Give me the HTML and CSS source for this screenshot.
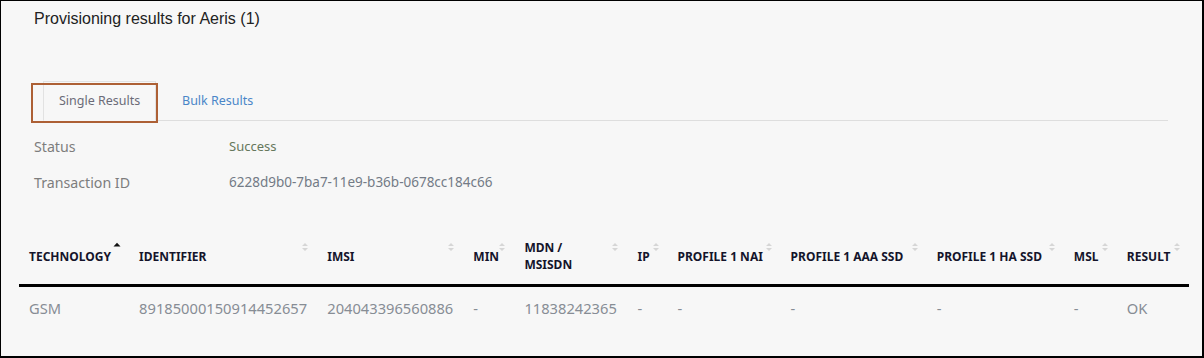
FILE: index.html
```html
<!DOCTYPE html>
<html lang="en">
<head>
<meta charset="utf-8">
<title>Provisioning results</title>
<link rel="stylesheet" href="styles.css">
</head>
<body>
<div class="frame">
  <h1 class="title">Provisioning results for Aeris (1)</h1>

  <ul class="tabs">
    <li class="tab tab-active"><span class="tab-link">Single Results</span></li>
    <li class="tab"><span class="tab-link tab-link-blue">Bulk Results</span></li>
  </ul>

  <dl class="details">
    <div class="detail-row"><dt>Status</dt><dd class="ok">Success</dd></div>
    <div class="detail-row"><dt>Transaction ID</dt><dd>6228d9b0-7ba7-11e9-b36b-0678cc184c66</dd></div>
  </dl>

  <table class="results">
    <colgroup>
      <col style="width:110px"><col style="width:188px"><col style="width:146px"><col style="width:51px">
      <col style="width:113px"><col style="width:40px"><col style="width:113px"><col style="width:146px">
      <col style="width:137px"><col style="width:53px"><col style="width:72px">
    </colgroup>
    <thead>
      <tr>
        <th>TECHNOLOGY<svg class="sort" viewBox="0 0 8 10"><path d="M0.5 4.5 L4 0.8 L7.5 4.5 Z" fill="#111"/></svg></th>
        <th>IDENTIFIER<svg class="sort" viewBox="0 0 8 10"><path d="M1 4 L4 1 L7 4 Z M1 6 L4 9 L7 6 Z" fill="#d6d6d6"/></svg></th>
        <th>IMSI<svg class="sort" viewBox="0 0 8 10"><path d="M1 4 L4 1 L7 4 Z M1 6 L4 9 L7 6 Z" fill="#d6d6d6"/></svg></th>
        <th>MIN<svg class="sort" viewBox="0 0 8 10"><path d="M1 4 L4 1 L7 4 Z M1 6 L4 9 L7 6 Z" fill="#d6d6d6"/></svg></th>
        <th>MDN /<br>MSISDN<svg class="sort" viewBox="0 0 8 10"><path d="M1 4 L4 1 L7 4 Z M1 6 L4 9 L7 6 Z" fill="#d6d6d6"/></svg></th>
        <th>IP<svg class="sort" viewBox="0 0 8 10"><path d="M1 4 L4 1 L7 4 Z M1 6 L4 9 L7 6 Z" fill="#d6d6d6"/></svg></th>
        <th>PROFILE 1 NAI<svg class="sort" viewBox="0 0 8 10"><path d="M1 4 L4 1 L7 4 Z M1 6 L4 9 L7 6 Z" fill="#d6d6d6"/></svg></th>
        <th>PROFILE 1 AAA SSD<svg class="sort" viewBox="0 0 8 10"><path d="M1 4 L4 1 L7 4 Z M1 6 L4 9 L7 6 Z" fill="#d6d6d6"/></svg></th>
        <th>PROFILE 1 HA SSD<svg class="sort" viewBox="0 0 8 10"><path d="M1 4 L4 1 L7 4 Z M1 6 L4 9 L7 6 Z" fill="#d6d6d6"/></svg></th>
        <th>MSL<svg class="sort" viewBox="0 0 8 10"><path d="M1 4 L4 1 L7 4 Z M1 6 L4 9 L7 6 Z" fill="#d6d6d6"/></svg></th>
        <th>RESULT<svg class="sort" viewBox="0 0 8 10"><path d="M1 4 L4 1 L7 4 Z M1 6 L4 9 L7 6 Z" fill="#d6d6d6"/></svg></th>
      </tr>
    </thead>
    <tbody>
      <tr>
        <td>GSM</td>
        <td>89185000150914452657</td>
        <td>204043396560886</td>
        <td>-</td>
        <td>11838242365</td>
        <td>-</td>
        <td>-</td>
        <td>-</td>
        <td>-</td>
        <td>-</td>
        <td>OK</td>
      </tr>
    </tbody>
  </table>
</div>
</body>
</html>
```

FILE: styles.css
```css
* { box-sizing: border-box; }

html, body {
  margin: 0;
  padding: 0;
  background: #f7f7f7;
}

.frame {
  width: 1204px;
  height: 358px;
  border: 1px solid #000;
  border-right-width: 2px;
  border-bottom-width: 2px;
  background: #f7f7f7;
  font-family: "Noto Sans", "Open Sans", sans-serif;
  overflow: hidden;
}

.title {
  margin: 0;
  padding: 8px 0 0 33px;
  height: 79px;
  font-family: "Liberation Sans", Arial, sans-serif;
  font-weight: normal;
  font-size: 16px;
  line-height: 19px;
  color: #222;
}

.tabs {
  list-style: none;
  margin: 0 34px 0 42px;
  padding: 0;
  display: flex;
  height: 41px;
  border-bottom: 1px solid #dedede;
}

.tab {
  height: 40px;
  display: flex;
  align-items: center;
  padding-bottom: 1px;
  font-size: 12.5px;
}

.tab-active {
  position: relative;
  width: 113px;
  margin-top: 1px;
  border: 1px solid #e2e2e2;
  border-bottom-color: #f7f7f7;
  padding-left: 15px;
  color: #6b6b78;
}

.tab-active::after {
  content: "";
  position: absolute;
  left: -13px;
  top: 1px;
  width: 123px;
  height: 36px;
  border: 2px solid #ad6035;
}

.tab + .tab {
  padding-left: 26px;
  padding-top: 1px;
}

.tab-link-blue {
  color: #4a86c8;
}

.details {
  margin: 0;
  padding: 7px 0 0 33px;
  height: 113px;
}

.detail-row {
  display: flex;
  height: 36px;
  align-items: center;
}

.detail-row dt {
  width: 195px;
  font-size: 14.2px;
  color: #7d7d7d;
}

.detail-row dd {
  margin: 0;
  font-size: 13.5px;
  color: #737b86;
}

.detail-row dd.ok {
  font-size: 13px;
  color: #66775c;
}

.results {
  margin-left: 18px;
  border-collapse: collapse;
  table-layout: fixed;
  width: 1170px;
}

.results th {
  position: relative;
  padding: 5px 10px 11px 10px;
  text-align: left;
  vertical-align: middle;
  font-size: 12px;
  line-height: 17px;
  font-weight: 700;
  color: #14142b;
  border-bottom: 3px solid #000;
  white-space: nowrap;
}

.sort {
  position: absolute;
  right: 8px;
  top: 8px;
  width: 8px;
  height: 10px;
}

.results td {
  height: 43px;
  padding: 0 10px;
  font-size: 14.7px;
  color: #878d95;
  vertical-align: middle;
  white-space: nowrap;
}
```
